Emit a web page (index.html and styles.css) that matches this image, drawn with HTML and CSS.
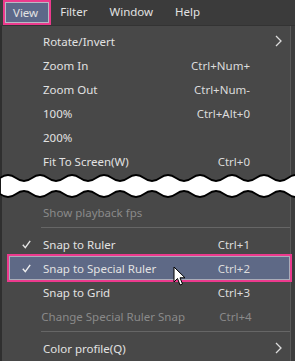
FILE: index.html
```html
<!DOCTYPE html>
<html lang="en">
<head>
    <title>View menu</title>
    <link rel="stylesheet" href="styles.css">
</head>
<body>
    <div class="menubar">
        <span class="bar-item active">View</span>
        <span class="bar-item">Filter</span>
        <span class="bar-item">Window</span>
        <span class="bar-item">Help</span>
    </div>
    <div class="menu">
        <div class="item"><span class="check"></span><span class="label">Rotate/Invert</span><span class="key"></span>
            <span class="sub"><svg width="7" height="12" viewBox="0 0 7 12"><path d="M1 1 L6 6 L1 11" fill="none" stroke="#dcdcdc" stroke-width="1.3"/></svg></span></div>
        <div class="item"><span class="check"></span><span class="label">Zoom In</span><span class="key">Ctrl+Num+</span><span class="sub"></span></div>
        <div class="item"><span class="check"></span><span class="label">Zoom Out</span><span class="key">Ctrl+Num-</span><span class="sub"></span></div>
        <div class="item"><span class="check"></span><span class="label">100%</span><span class="key">Ctrl+Alt+0</span><span class="sub"></span></div>
        <div class="item"><span class="check"></span><span class="label">200%</span><span class="key"></span><span class="sub"></span></div>
        <div class="item"><span class="check"></span><span class="label">Fit To Screen(W)</span><span class="key">Ctrl+0</span><span class="sub"></span></div>

        <svg class="cut" width="295" height="28" viewBox="0 0 295 28">
            <path d="M0 6 Q8 0 16 6 T32 6 T48 6 T64 6 T80 6 T96 6 T112 6 T128 6 T144 6 T160 6 T176 6 T192 6 T208 6 T224 6 T240 6 T256 6 T272 6 T288 6 T304 6 L304 22 Q296 28 288 22 T272 22 T256 22 T240 22 T224 22 T208 22 T192 22 T176 22 T160 22 T144 22 T128 22 T112 22 T96 22 T80 22 T64 22 T48 22 T32 22 T16 22 T0 22 Z" fill="#fff" stroke="#000" stroke-width="1.8"/>
        </svg>

        <div class="item disabled"><span class="check"></span><span class="label">Show playback fps</span><span class="key"></span><span class="sub"></span></div>
        <div class="sep"></div>
        <div class="item"><span class="check"><svg width="9" height="9" viewBox="0 0 9 9"><path d="M0.8 4.8 L3.3 7.6 L8.2 0.8" fill="none" stroke="#e6e6e6" stroke-width="1.4"/></svg></span><span class="label">Snap to Ruler</span><span class="key">Ctrl+1</span><span class="sub"></span></div>
        <div class="item hover"><span class="check"><svg width="9" height="9" viewBox="0 0 9 9"><path d="M0.8 4.8 L3.3 7.6 L8.2 0.8" fill="none" stroke="#f0f0f0" stroke-width="1.4"/></svg></span><span class="label">Snap to Special Ruler</span><span class="key">Ctrl+2</span><span class="sub"></span>
            <svg class="cursor" width="14" height="21" viewBox="0 0 14 21">
                <path d="M1 1 L1 16 L4.5 12.5 L7 19 L9.5 18 L7 11.8 L12 11.8 Z" fill="#fff" stroke="#000" stroke-width="1"/>
            </svg>
        </div>
        <div class="item"><span class="check"></span><span class="label">Snap to Grid</span><span class="key">Ctrl+3</span><span class="sub"></span></div>
        <div class="item disabled"><span class="check"></span><span class="label">Change Special Ruler Snap</span><span class="key">Ctrl+4</span><span class="sub"></span></div>
        <div class="sep"></div>
        <div class="item"><span class="check"></span><span class="label">Color profile(Q)</span><span class="key"></span>
            <span class="sub"><svg width="7" height="12" viewBox="0 0 7 12"><path d="M1 1 L6 6 L1 11" fill="none" stroke="#dcdcdc" stroke-width="1.3"/></svg></span></div>
    </div>
</body>
</html>
```
FILE: styles.css
```css
body {
    margin: 0;
    width: 295px;
    height: 361px;
    overflow: hidden;
    background-color: #3d3d3d;
    font-family: "Noto Sans", "Open Sans", sans-serif;
    font-size: 11.5px;
    color: #e2e2e2;
}

.menubar {
    height: 26px;
    display: flex;
    align-items: center;
    padding-left: 5px;
    background-color: #3b3b3b;
    border-bottom: 1px solid #333;
    box-sizing: border-box;
}

.bar-item {
    height: 21px;
    line-height: 20px;
    padding: 0 11px;
    box-sizing: border-box;
    white-space: nowrap;
}

.active {
    padding: 0 10px 0 7px;
    background-color: #5d6889;
    border: 1px solid #b9b9c4;
    outline: 2px solid #ec3a8d;
}

.menu {
    position: relative;
    width: 291px;
    height: 335px;
    padding-top: 3px;
    box-sizing: border-box;
    background-color: #484848;
    border-left: 2px solid #2f2f2f;
    border-right: 1px solid #5a5a5a;
}

.item {
    position: relative;
    display: flex;
    align-items: center;
    height: 24px;
    margin-left: 7px;
    white-space: nowrap;
}

.check {
    width: 34px;
    display: flex;
    justify-content: center;
    align-items: center;
}

.label {
    flex: 1;
}

.key {
    width: 70px;
    text-align: right;
    color: #dcdcdc;
}

.sub {
    width: 40px;
    display: flex;
    justify-content: flex-end;
    align-items: center;
    padding-right: 8px;
    box-sizing: border-box;
}

.disabled .label,
.disabled .key {
    color: #8a8a8a;
}

.sep {
    height: 1px;
    margin: 3px 0 4px 39px;
    background-color: #666;
}

.hover {
    background-color: #5e6986;
    box-shadow: inset 0 0 0 1px #a9acb8;
    outline: 2px solid #ec3a8d;
}

.cut {
    display: block;
    margin: -1px 0 0 -2px;
}

.cursor {
    position: absolute;
    left: 164px;
    top: 10px;
}
```
